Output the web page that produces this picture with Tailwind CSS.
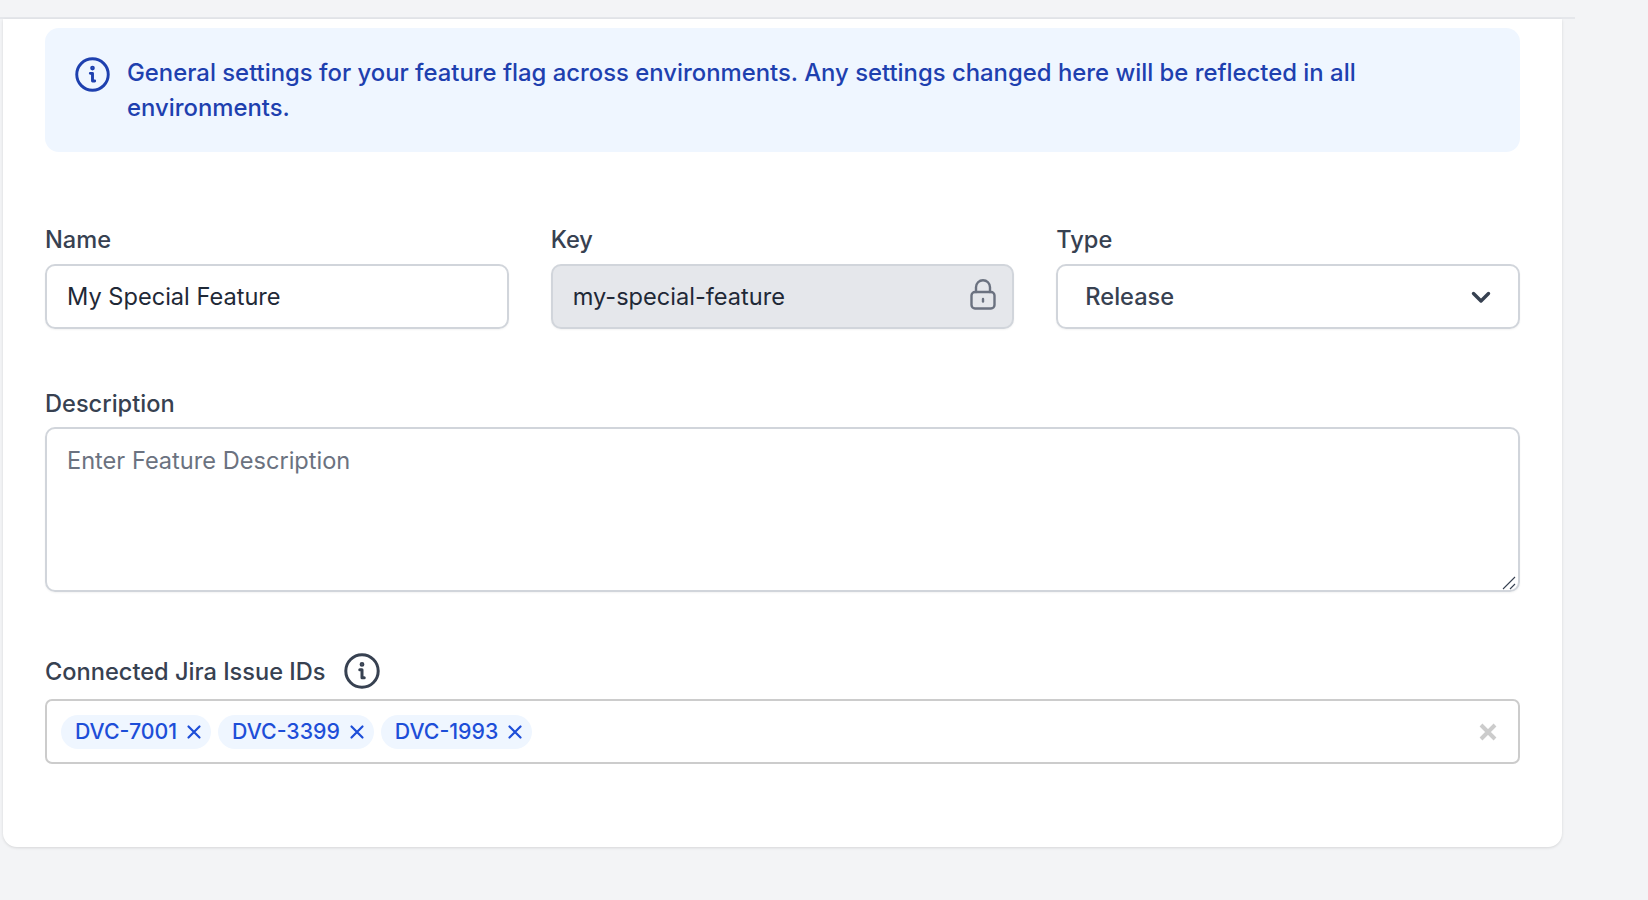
<!DOCTYPE html>
<html lang="en">
<head>
    <meta charset="UTF-8">
    <title>Feature settings</title>
    <script src="https://cdn.jsdelivr.net/npm/@tailwindcss/browser@4"></script>
</head>
<body class="h-screen overflow-hidden bg-[#f3f4f6] font-['Inter',sans-serif] text-[23.6px] text-[#374151]">
<!-- Top edge -->
<div class="h-[19px] w-[1575px] border-b-2 border-[#e5e7eb]"></div>

<!-- Card -->
<div class="ml-[3px] h-[828px] w-[1559px] rounded-b-[14px] bg-white px-[42px] pt-[9px] shadow-[0_1px_3px_rgba(0,0,0,0.12)]">
    <!-- Info alert -->
    <div class="flex h-[124px] w-[1475px] gap-[17px] rounded-[14px] bg-[#eff6ff] pl-[30px] pr-[30px] pt-[27px] text-[23.87px] font-medium leading-[35px] text-[#1e40af]">
        <svg class="mt-[2px] h-[35px] w-[35px] shrink-0" viewBox="0 0 24 24" fill="none" stroke="currentColor" stroke-width="2" stroke-linecap="round" stroke-linejoin="round">
            <circle cx="12" cy="12" r="10.8"/>
            <path d="M10.5 11.2H12v5.3h1.5"/>
            <circle cx="12" cy="7.6" r="0.6" fill="currentColor"/>
        </svg>
        <p class="w-[1240px]">General settings for your feature flag across environments. Any settings changed here will be reflected in all environments.</p>
    </div>

    <!-- Name, key, type -->
    <div class="mt-[70px] grid w-[1475px] grid-cols-3 gap-x-[42px]">
        <div>
            <label class="block h-[35px] font-medium leading-[35px]">Name</label>
            <div class="mt-[7px] flex h-[65px] items-center rounded-[10px] border-2 border-[#d1d5db] pl-[20px] text-[#1f2937] shadow-[0_1px_2px_rgba(0,0,0,0.05)]">My Special Feature</div>
        </div>
        <div>
            <label class="block h-[35px] font-medium leading-[35px]">Key</label>
            <div class="mt-[7px] flex h-[65px] items-center justify-between rounded-[10px] border-2 border-[#d1d5db] bg-[#e5e7eb] pl-[20px] pr-[16px] text-[#1f2937] shadow-[0_1px_2px_rgba(0,0,0,0.05)]">
                <span>my-special-feature</span>
                <svg class="mb-[4px] h-[31px] w-[26px]" viewBox="0 0 26 31" fill="none" stroke="#6b7280" stroke-width="2.4" stroke-linecap="round" stroke-linejoin="round">
                    <rect x="1.5" y="13" width="23" height="16.5" rx="3.5"/>
                    <path d="M6 13V8.2a7 7 0 0 1 14 0V13"/>
                    <path d="M13 20v2.5"/>
                </svg>
            </div>
        </div>
        <div>
            <label class="block h-[35px] font-medium leading-[35px]">Type</label>
            <div class="mt-[7px] flex h-[65px] items-center justify-between rounded-[10px] border-2 border-[#d1d5db] pl-[27px] pr-[25px] font-medium shadow-[0_1px_2px_rgba(0,0,0,0.05)]">
                <span>Release</span>
                <svg class="h-[24px] w-[24px]" viewBox="0 0 24 24" fill="none" stroke="#374151" stroke-width="3.4" stroke-linecap="round" stroke-linejoin="round">
                    <path d="M4.5 8.5l7.5 7.5 7.5-7.5"/>
                </svg>
            </div>
        </div>
    </div>

    <!-- Description -->
    <div class="mt-[57px] w-[1475px]">
        <label class="block h-[35px] font-medium leading-[35px]">Description</label>
        <div class="relative mt-[6px] h-[165px] rounded-[10px] border-2 border-[#d1d5db] pl-[20px] pt-[14px] leading-[35px] text-[#6b7280] shadow-[0_1px_2px_rgba(0,0,0,0.05)]">
            Enter Feature Description
            <svg class="absolute bottom-[0px] right-[1px] h-[16px] w-[16px]" viewBox="0 0 16 16" fill="none" stroke="#374151" stroke-width="1.1">
                <path d="M2 15L14 3"/>
                <path d="M9 15l5-5"/>
            </svg>
        </div>
    </div>

    <!-- Jira issues -->
    <div class="mt-[61px] w-[1475px]">
        <div class="flex h-[36px] items-center gap-[18px] font-medium">
            <span class="mt-[2px]">Connected Jira Issue IDs</span>
            <svg class="h-[36px] w-[36px]" viewBox="0 0 24 24" fill="none" stroke="currentColor" stroke-width="2" stroke-linecap="round" stroke-linejoin="round">
                <circle cx="12" cy="12" r="10.8"/>
                <path d="M10.5 11.2H12v5.3h1.5"/>
                <circle cx="12" cy="7.6" r="0.6" fill="currentColor"/>
            </svg>
        </div>
        <div class="mt-[10px] flex h-[65px] items-center gap-[7px] rounded-[7px] border-2 border-[#cccccc] pl-[14px] pr-[21px] pt-[1px] text-[21.3px] font-medium text-[#1d4ed8]">
            <span class="flex h-[34px] items-center gap-[9px] rounded-full bg-[#eff6ff] pl-[14px] pr-[9px]">DVC-7001
                <svg class="h-[16px] w-[16px]" viewBox="0 0 16 16" fill="none" stroke="currentColor" stroke-width="2.2" stroke-linecap="round"><path d="M2.5 2.5l11 11M13.5 2.5l-11 11"/></svg>
            </span>
            <span class="flex h-[34px] items-center gap-[9px] rounded-full bg-[#eff6ff] pl-[14px] pr-[9px]">DVC-3399
                <svg class="h-[16px] w-[16px]" viewBox="0 0 16 16" fill="none" stroke="currentColor" stroke-width="2.2" stroke-linecap="round"><path d="M2.5 2.5l11 11M13.5 2.5l-11 11"/></svg>
            </span>
            <span class="flex h-[34px] items-center gap-[9px] rounded-full bg-[#eff6ff] pl-[14px] pr-[9px]">DVC-1993
                <svg class="h-[16px] w-[16px]" viewBox="0 0 16 16" fill="none" stroke="currentColor" stroke-width="2.2" stroke-linecap="round"><path d="M2.5 2.5l11 11M13.5 2.5l-11 11"/></svg>
            </span>
            <svg class="ml-auto h-[18px] w-[18px]" viewBox="0 0 18 18" fill="none" stroke="#cccccc" stroke-width="4"><path d="M2 2l14 14M16 2L2 16"/></svg>
        </div>
    </div>
</div>
</body>
</html>
